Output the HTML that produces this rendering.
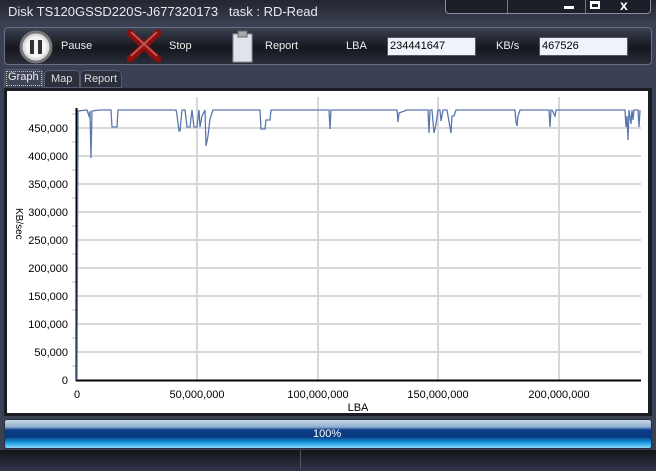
<!DOCTYPE html><html><head><meta charset="utf-8"><style>
*{margin:0;padding:0;box-sizing:border-box}
body{width:656px;height:471px;overflow:hidden;background:#3b4154;font-family:"Liberation Sans",sans-serif;position:relative}
.t{position:absolute;white-space:nowrap}
</style></head><body>
<div style="position:absolute;left:0;top:0;width:656px;height:24px;background:linear-gradient(#23262f,#3a3f52)"></div>
<div class="t" style="left:8px;top:4px;font-size:13px;color:#e8e8ee">Disk TS120GSSD220S-J677320173&nbsp;&nbsp;&nbsp;task : RD-Read</div>
<div style="position:absolute;left:445px;top:-2px;width:206px;height:16px;border:1px solid #8890a0;border-top:none;border-radius:0 0 4px 4px;background:#1c1f27"></div>
<div style="position:absolute;left:507px;top:0;width:1px;height:13px;background:#778"></div>
<div style="position:absolute;left:585px;top:0;width:1px;height:13px;background:#778"></div>
<div style="position:absolute;left:564px;top:6px;width:10px;height:3px;background:#fff"></div>
<div style="position:absolute;left:590px;top:1px;width:10px;height:8px;border:2px solid #fff;border-top-width:3px"></div>
<div class="t" style="left:620px;top:-3px;font-size:14px;font-weight:bold;color:#fff">x</div>
<div style="position:absolute;left:4px;top:27px;width:648px;height:38px;border:1px solid #6a7080;border-radius:4px;background:linear-gradient(#3c4152,#15171d 55%,#2a2e3a)"></div>
<svg style="position:absolute;left:18px;top:29px" width="36" height="36"><circle cx="18" cy="18" r="15" fill="#ddd" stroke="#777" stroke-width="3"/><circle cx="18" cy="18" r="11" fill="#f4f4f4"/><rect x="12" y="11" width="4" height="14" fill="#333"/><rect x="20" y="11" width="4" height="14" fill="#333"/></svg>
<div class="t" style="left:61px;top:40px;font-size:11px;color:#eee">Pause</div>
<svg style="position:absolute;left:126px;top:29px" width="36" height="34"><path d="M4 4 L32 30 M32 4 L4 30" stroke="#8a1010" stroke-width="7" stroke-linecap="round"/><path d="M5 3 L31 27 M31 3 L5 27" stroke="#d67070" stroke-width="2" opacity=".7"/></svg>
<div class="t" style="left:169px;top:40px;font-size:11px;color:#eee">Stop</div>
<svg style="position:absolute;left:230px;top:30px" width="26" height="34"><rect x="3" y="4" width="19" height="28" fill="#e0e4ea" stroke="#8a9099"/><rect x="8" y="1" width="9" height="6" fill="#aaa" stroke="#666"/></svg>
<div class="t" style="left:265px;top:40px;font-size:11px;color:#eee">Report</div>
<div class="t" style="left:346px;top:40px;font-size:11px;color:#eee">LBA</div>
<div style="position:absolute;left:387px;top:37px;width:89px;height:19px;background:#eef2fa;border:1px solid #556;font-size:11px;padding:2px 2px;color:#000">234441647</div>
<div class="t" style="left:496px;top:40px;font-size:11px;color:#eee">KB/s</div>
<div style="position:absolute;left:539px;top:37px;width:89px;height:19px;background:#eef2fa;border:1px solid #556;font-size:11px;padding:2px 2px;color:#000">467526</div>
<div style="position:absolute;left:4px;top:69px;width:39px;height:19px;background:#3e4456;border:1px solid #555c70;border-bottom:none;border-radius:3px 3px 0 0"></div>
<div style="position:absolute;left:6px;top:71px;width:36px;height:15px;border:1px dotted #cc9"></div>
<div class="t" style="left:8px;top:71px;font-size:11px;color:#eee">Graph</div>
<div style="position:absolute;left:44px;top:70px;width:36px;height:18px;background:#2c303c;border:1px solid #555c70;border-radius:5px 5px 0 0"></div>
<div class="t" style="left:51px;top:73px;font-size:11px;color:#ddd">Map</div>
<div style="position:absolute;left:80px;top:70px;width:42px;height:18px;background:#2c303c;border:1px solid #555c70;border-radius:5px 5px 0 0"></div>
<div class="t" style="left:84px;top:73px;font-size:11px;color:#ddd">Report</div>
<div style="position:absolute;left:4px;top:88px;width:648px;height:328px;background:#1a1d24"></div>
<svg style="position:absolute;left:7px;top:91px" width="641" height="322" font-family="Liberation Sans" font-size="11">
<rect width="641" height="322" fill="#fff"/>
<g stroke="#d8d8d8" stroke-width="2">
<line x1="70" x2="634" y1="37" y2="37"/><line x1="70" x2="634" y1="65" y2="65"/><line x1="70" x2="634" y1="93" y2="93"/><line x1="70" x2="634" y1="121" y2="121"/><line x1="70" x2="634" y1="149" y2="149"/><line x1="70" x2="634" y1="177" y2="177"/><line x1="70" x2="634" y1="205" y2="205"/><line x1="70" x2="634" y1="233" y2="233"/><line x1="70" x2="634" y1="261" y2="261"/>
<line x1="190" x2="190" y1="6" y2="289"/><line x1="311" x2="311" y1="6" y2="289"/><line x1="431" x2="431" y1="6" y2="289"/><line x1="552" x2="552" y1="6" y2="289"/>
</g>
<g fill="#000" text-anchor="end">
<text x="61" y="41">450,000</text><text x="61" y="69">400,000</text><text x="61" y="97">350,000</text><text x="61" y="125">300,000</text><text x="61" y="153">250,000</text><text x="61" y="181">200,000</text><text x="61" y="209">150,000</text><text x="61" y="237">100,000</text><text x="61" y="265">50,000</text><text x="61" y="293">0</text>
</g>
<text x="0" y="0" font-size="10" transform="translate(9,117) rotate(90)" fill="#000">KB/sec</text>
<g fill="#000" text-anchor="middle">
<text x="70" y="307">0</text><text x="190" y="307">50,000,000</text><text x="311" y="307">100,000,000</text><text x="431" y="307">150,000,000</text><text x="552" y="307">200,000,000</text><text x="351" y="320">LBA</text>
</g>
<g stroke="#bbb"><line x1="65" x2="69" y1="23" y2="23"/><line x1="65" x2="69" y1="51" y2="51"/><line x1="65" x2="69" y1="79" y2="79"/><line x1="65" x2="69" y1="107" y2="107"/><line x1="65" x2="69" y1="135" y2="135"/><line x1="65" x2="69" y1="163" y2="163"/><line x1="65" x2="69" y1="191" y2="191"/><line x1="65" x2="69" y1="219" y2="219"/><line x1="65" x2="69" y1="247" y2="247"/><line x1="65" x2="69" y1="275" y2="275"/></g>
<line x1="69.5" x2="69.5" y1="17" y2="290" stroke="#000" stroke-width="2"/>
<line x1="69" x2="634" y1="289.5" y2="289.5" stroke="#000" stroke-width="2"/>
<polyline fill="none" stroke="#5a78b0" stroke-width="1.3" points="70,289 71,20 80,19 82,25 83,20 84,67 85,20 92,19 104,19 105,36 110,36 111,19 130,19 169,19 170,24 172,40 173,40 175,19 178,19 180,36 183,36 185,19 187,36 190,36 192,19 193,36 195,25 198,19 199,55 201,45 203,28 206,19 230,19 240,19 253,19 254,38 258,38 259,29 263,29 264,19 300,19 322,19 323,38 324,19 390,19 391,31 392,22 400,19 421,19 422,42 423,19 425,19 427,42 429,33 431,19 433,19 434,30 436,19 440,19 444,42 445,25 447,25 449,19 500,19 508,19 509,31 510,35 511,25 513,19 530,19 542,19 543,36 544,19 545,19 548,25 549,19 600,19 618,19 619,36 620,25 621,49 622,19 624,33 625,19 626,29 627,19 630,19 631,19 632,36 633,19"/>
</svg>
<div style="position:absolute;left:4px;top:419px;width:648px;height:30px;border:1px solid #2a3040;border-radius:3px;background:linear-gradient(#c8d8e8,#8fb0d0 25%,#0d3e8a 35%,#083a80 60%,#1898e0 80%,#8ad8f8)"></div>
<div class="t" style="left:313px;top:428px;font-size:11px;color:#fff">100%</div>
<div style="position:absolute;left:0;top:450px;width:656px;height:21px;background:linear-gradient(#121419,#30354a)"></div>
<div style="position:absolute;left:300px;top:450px;width:1px;height:19px;background:#555"></div>
</body></html>
